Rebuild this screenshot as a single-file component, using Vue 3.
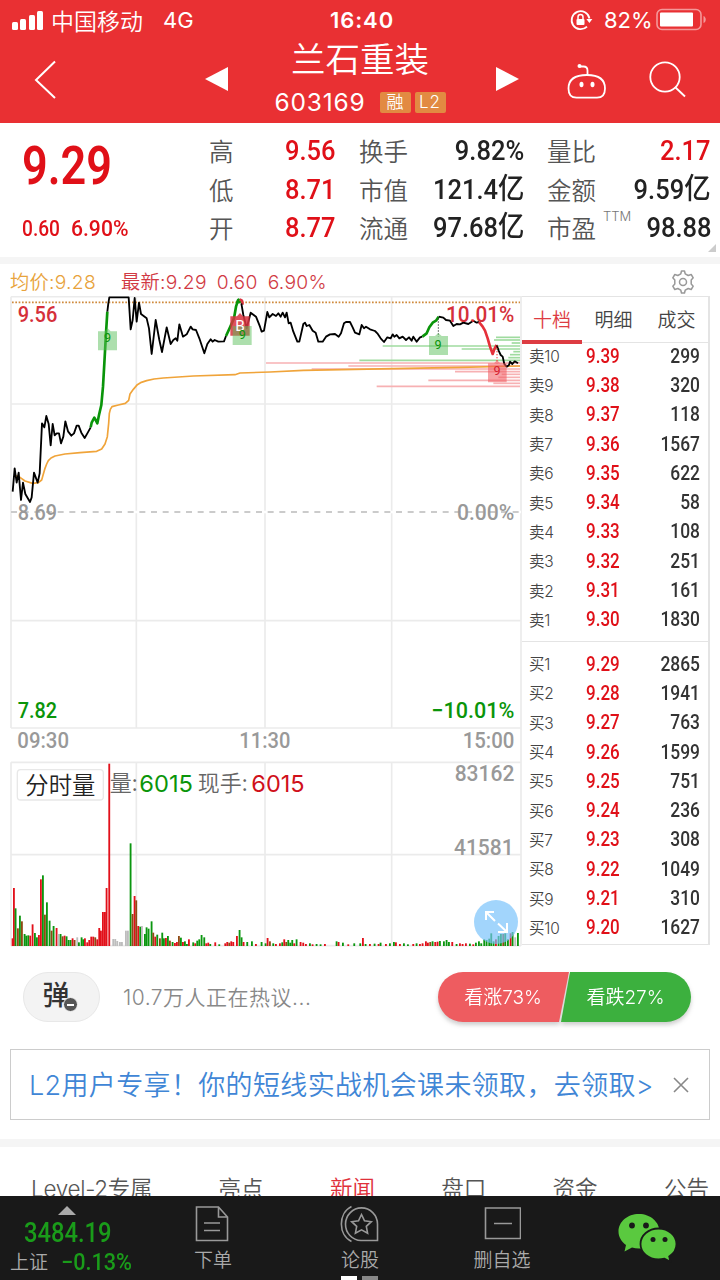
<template>
  <div class="app">
    <header class="header">
      <div class="status">
        <svg class="signal" viewBox="0 0 34 20" width="34" height="20">
          <rect x="1" y="12" width="6" height="8" rx="1.5" />
          <rect x="9" y="9" width="6" height="11" rx="1.5" />
          <rect x="18" y="5" width="6" height="15" rx="1.5" />
          <rect x="26" y="1" width="6" height="19" rx="1.5" />
        </svg>
        <span class="carrier">中国移动</span>
        <span class="network">4G</span>
        <span class="clock">16:40</span>
        <svg class="lock" viewBox="0 0 24 24" width="24" height="24">
          <path d="M20.5 10.5A9 9 0 1 0 18 18.6" fill="none" stroke="#fff" stroke-width="1.8" />
          <path d="M17.4 11h6l-3 4z" />
          <rect x="7.5" y="11" width="8" height="6" rx="1" />
          <path d="M9 11V9a2.5 2.5 0 0 1 5 0v2" fill="none" stroke="#fff" stroke-width="1.5" />
        </svg>
        <span class="percent">82%</span>
        <svg class="battery" viewBox="0 0 52 24" width="52" height="24">
          <rect x="1" y="1.5" width="44" height="20" rx="5" fill="none" stroke="#fff" stroke-opacity=".5" stroke-width="1.6" />
          <rect x="4" y="4.500" width="33" height="14" rx="1" />
          <path d="M47.5 8c3 1 3 6 0 7z" opacity=".5" />
        </svg>
      </div>
      <div class="nav">
        <svg class="back" viewBox="0 0 24 40" width="24" height="40">
          <path d="M21 1.500 2 20l19 18" fill="none" stroke="#fff" stroke-width="2" />
        </svg>
        <svg class="prev" viewBox="0 0 23 24" width="23" height="24"><path d="M0 12 23 0v24z" /></svg>
        <div class="title">
          <h1>兰石重装</h1>
          <div class="code">
            <span>603169</span>
            <i>融</i>
            <i class="l2">L2</i>
          </div>
        </div>
        <svg class="next" viewBox="0 0 23 24" width="23" height="24"><path d="M23 12 0 0v24z" /></svg>
        <svg class="robot" viewBox="0 0 40 36" width="40" height="36" fill="none" stroke="#fff" stroke-width="1.8">
          <path d="M20.500 12V7.500q0-4-4-4H13" />
          <circle cx="12.500" cy="3" r="2" fill="#fff" stroke="none" />
          <path d="M20 12c11 0 18 4 18 13.500 0 7-3 9.200-8 9.200H9.500c-5 0-8-2.200-8-9.200C1.500 16 9 12 20 12z" />
          <ellipse cx="14.500" cy="21.500" rx="2" ry="2.800" fill="#fff" stroke="none" />
          <ellipse cx="25.500" cy="21.500" rx="2" ry="2.800" fill="#fff" stroke="none" />
        </svg>
        <svg class="search" viewBox="0 0 38 38" width="38" height="38" fill="none" stroke="#fff" stroke-width="1.8">
          <circle cx="16" cy="16" r="14.700" />
          <path d="m26 26 10 9.500" />
        </svg>
      </div>
    </header>

    <section class="quote">
      <div class="main-price">
        <div class="price num">9.29</div>
        <div class="change"><span class="num">0.60</span><span class="num">6.90%</span></div>
      </div>
      <dl v-for="(col, i) in stats" :key="i" :class="'col' + i">
        <div v-for="s in col" :key="s.label">
          <dt>{{ s.label }}<sup v-if="s.sup">{{ s.sup }}</sup></dt>
          <dd class="num" :class="{ red: s.red }">{{ s.value }}<b v-if="s.unit">{{ s.unit }}</b></dd>
        </div>
      </dl>
      <span class="corner"></span>
    </section>

    <section class="market">
      <div class="legend">
        <span class="avg">均价:9.28</span>
        <span class="last">最新:9.29</span>
        <span class="last">0.60</span>
        <span class="last">6.90%</span>
        <svg class="gear" viewBox="0 0 24 24" width="24" height="24" fill="none" stroke="#999" stroke-width="1.500" stroke-linejoin="round">
          <path d="M9.800 3.800 10.500 1h3l.7 2.800 3 1.700 3-1 2 3.300-2 2.200v4l2 2.200-2 3.300-3-1-3 1.700-.7 2.800h-3l-.7-2.800-3-1.700-3 1-2-3.300 2-2.200v-4l-2-2.200 2-3.300 3 1z" />
          <circle cx="12" cy="12" r="3.500" />
        </svg>
      </div>

      <div class="panels">
        <div class="chart">
          <svg viewBox="0 18 1566 1962" width="522" height="654">
            <!-- grid -->
            <g fill="none" stroke="#ebebeb" stroke-width="5">
              <path d="M33 20H1566M33 342H1563M33 992H1563M33 1314H1563M33 1417H1563M33 1694H1563M33 1967H1563" />
              <path d="M33 20V1314M409 20V1314M795 20V1314M1175 20V1314M1563 20V1967" />
              <path d="M33 1417V1967M409 1417V1967M795 1417V1967M1175 1417V1967" />
            </g>
            <path d="M33 666H1563" stroke="#fff" stroke-width="7" />
            <path d="M33 666H1563" stroke="#bbb" stroke-width="4" stroke-dasharray="18 17" />
            <path d="M36 37H1560" stroke="#d08a3c" stroke-width="5" stroke-dasharray="5 5" />

            <!-- depth -->
            <path v-for="(d, i) in depth" :key="'d' + i" :d="`M${d[0] + 780} ${d[1]}H1560`" :stroke="d[1] < 215 ? '#9fdb9f' : '#f7b1b3'" stroke-width="5" />

            <g fill="none" stroke-linejoin="round">
              <polyline :points="avgLine" stroke="#f0a43a" stroke-width="5" />
              <polyline v-for="(l, i) in lines" :key="'l' + i" :points="l.points" :stroke="l.color" :stroke-width="l.color === '#000' ? 5.5 : 8" />
            </g>

            <!-- signals -->
            <g class="din mark" font-size="38" text-anchor="middle">
              <path d="M1315 85V140" stroke="#333" stroke-width="3" stroke-dasharray="4 5" />
              <path d="M1491 165V220" stroke="#e33" stroke-width="3" stroke-dasharray="4 5" />
              <path d="M294 124h20l9-9 9 9h19v57h-57z" fill="#5cc05c" opacity=".5" />
              <text x="323" y="156" fill="#0a950a">9</text>
              <path d="M691 79h20l9-10 9 10h20v58h-58z" fill="#d93340" opacity=".85" />
              <path d="M698 108h57v57h-57z" fill="#5cc05c" opacity=".5" />
              <text x="720" y="124" fill="#fff" font-size="46">B</text>
              <text x="727" y="148" fill="#0a950a">9</text>
              <path d="M1287 138h18l10-9 10 9h19v57h-57z" fill="#5cc05c" opacity=".5" />
              <text x="1314" y="177" fill="#0a950a">9</text>
              <path d="M1464 220h18l9-9 10 9h19v57h-56z" fill="#f0585c" opacity=".55" />
              <text x="1491" y="256" fill="#d42030">9</text>
            </g>

            <g class="din" font-size="66">
              <text v-for="t in chartLabels" :key="t.text" :x="t.x" :y="t.y" :fill="t.color" :textLength="t.w" lengthAdjust="spacingAndGlyphs">{{ t.text }}</text>
            </g>

            <!-- volume -->
            <rect x="52" y="1439" width="258" height="91" rx="10" fill="#fff" stroke="#e8e8e8" stroke-width="4" />
            <text class="cjk" x="76" y="1511" font-size="70" fill="#222">分时量</text>
            <g class="cjk" font-size="66">
              <text x="329" y="1503" fill="#666">量:</text>
              <text x="593" y="1503" fill="#666">现手:</text>
            </g>
            <g class="vol" font-size="69">
              <text x="418" y="1505" fill="#0a950a" textLength="161" lengthAdjust="spacingAndGlyphs">6015</text>
              <text x="754" y="1505" fill="#d0101a" textLength="160" lengthAdjust="spacingAndGlyphs">6015</text>
            </g>
            <rect v-for="(b, i) in volume" :key="'v' + i" :x="b[0] - 3" :y="1968 - b[1]" width="5.500" :height="b[1]" :fill="barColors[b[2]]" />
          </svg>
          <button class="expand">
            <svg viewBox="0 0 44 44" width="44" height="44" fill="none" stroke="#fff" stroke-width="2">
              <path d="M12 20V12h8M12 12l9 9" />
              <path d="M33 23v9h-9M33 32l-9-8.500" />
            </svg>
          </button>
        </div>

        <div class="book">
          <div class="book-tabs">
            <span class="active">十档</span>
            <span>明细</span>
            <span>成交</span>
          </div>
          <ul class="sell">
            <li v-for="r in sells" :key="r[0]">
              <span>{{ r[0] }}</span><b class="num">{{ r[1] }}</b><em class="num">{{ r[2] }}</em>
            </li>
          </ul>
          <ul class="buy">
            <li v-for="r in buys" :key="r[0]">
              <span>{{ r[0] }}</span><b class="num">{{ r[1] }}</b><em class="num">{{ r[2] }}</em>
            </li>
          </ul>
        </div>
      </div>
    </section>

    <section class="discuss">
      <div class="danmu">弹<i></i></div>
      <span class="hot">10.7万人正在热议...</span>
      <div class="vote">
        <div class="up"><span>看涨73%</span></div>
        <div class="down"><span>看跌27%</span></div>
      </div>
    </section>

    <section class="banner">
      <span>L2用户专享！你的短线实战机会课未领取，去领取&gt;</span>
      <svg viewBox="0 0 16 16" width="16" height="16"><path d="m1 1 14 14M15 1 1 15" stroke="#888" stroke-width="1.600" /></svg>
    </section>

    <nav class="tabs">
      <span v-for="t in tabs" :key="t" :class="{ active: t === '新闻' }">{{ t }}</span>
    </nav>

    <footer class="toolbar">
      <div class="index">
        <span class="arrow"></span>
        <strong class="num">3484.19</strong>
        <div><span>上证</span><em class="num">−0.13%</em></div>
      </div>
      <div class="tool order">
        <svg viewBox="0 0 36 38" width="36" height="38">
          <path d="M1.500 2h22l9 10v23.500h-31zM23.500 2v10h9M9 18h16M9 25.500h16" />
        </svg>
        <span>下单</span>
      </div>
      <div class="tool talk">
        <svg viewBox="0 0 40 38" width="40" height="38">
          <path d="M11.500 1.500C-2 8-2 30 11.500 36.500M37.500 35.500V19A16 16.300 0 1 0 21 35.500z" />
          <path d="m21.500 9.500 3 6.300 6.800.9-5 4.700 1.300 6.800-6.100-3.300-6.100 3.300 1.300-6.800-5-4.700 6.800-.9z" />
        </svg>
        <span>论股</span>
      </div>
      <div class="tool remove">
        <svg viewBox="0 0 38 36" width="38" height="36">
          <path d="M2.500 3h35v30.500h-35zM11 18.500h18" />
        </svg>
        <span>删自选</span>
      </div>
      <svg class="wechat" viewBox="0 0 60 50" width="60" height="50">
        <path d="M21 1C9.500 1 .5 8.700.5 18.500c0 5.500 3 10.200 7.500 13.500l-1.500 6.500 7.500-4c2.200.7 4.500 1 7 1 11.500 0 20.500-7.700 20.500-17S32.500 1 21 1z" />
        <path d="M40.500 15.500c-10 0-18 6.800-18 15.500s8 15.500 18 15.500c2 0 4-.3 6-.8l6 3-1.300-5.200c4.300-2.800 7.300-7.300 7.300-12.500 0-8.700-8-15.500-18-15.500z" stroke="#191919" stroke-width="1.800" />
        <g fill="#191919">
          <circle cx="14" cy="12.500" r="2.900" /><circle cx="28" cy="12.500" r="2.900" />
          <circle cx="35" cy="26.500" r="2.500" /><circle cx="47" cy="26.500" r="2.500" />
        </g>
      </svg>
      <span class="pages"><i></i><i></i></span>
    </footer>
  </div>
</template>

<script setup>
const stats = [
  [
    { label: '高', value: '9.56', red: true },
    { label: '低', value: '8.71', red: true },
    { label: '开', value: '8.77', red: true }
  ],
  [
    { label: '换手', value: '9.82%' },
    { label: '市值', value: '121.4', unit: '亿' },
    { label: '流通', value: '97.68', unit: '亿' }
  ],
  [
    { label: '量比', value: '2.17', red: true },
    { label: '金额', value: '9.59', unit: '亿' },
    { label: '市盈', value: '98.88', sup: 'TTM' }
  ]
]

const sells = [
  ['卖10', '9.39', 299],
  ['卖9', '9.38', 320],
  ['卖8', '9.37', 118],
  ['卖7', '9.36', 1567],
  ['卖6', '9.35', 622],
  ['卖5', '9.34', 58],
  ['卖4', '9.33', 108],
  ['卖3', '9.32', 251],
  ['卖2', '9.31', 161],
  ['卖1', '9.30', 1830]
]

const buys = [
  ['买1', '9.29', 2865],
  ['买2', '9.28', 1941],
  ['买3', '9.27', 763],
  ['买4', '9.26', 1599],
  ['买5', '9.25', 751],
  ['买6', '9.24', 236],
  ['买7', '9.23', 308],
  ['买8', '9.22', 1049],
  ['买9', '9.21', 310],
  ['买10', '9.20', 1627]
]

const tabs = ['Level-2专属', '亮点', '新闻', '盘口', '资金', '公告']

// chart coordinates are in thirds of a pixel
const chartLabels = [
  { text: '9.56', x: 53, y: 96, w: 119, color: '#d5303a' },
  { text: '10.01%', x: 1338, y: 96, w: 205, color: '#d5303a' },
  { text: '8.69', x: 53, y: 689, w: 118, color: '#999' },
  { text: '0.00%', x: 1371, y: 689, w: 172, color: '#999' },
  { text: '7.82', x: 53, y: 1283, w: 118, color: '#0a950a' },
  { text: '−10.01%', x: 1294, y: 1283, w: 249, color: '#0a950a' },
  { text: '09:30', x: 52, y: 1375, w: 155, color: '#999' },
  { text: '11:30', x: 718, y: 1375, w: 153, color: '#999' },
  { text: '15:00', x: 1388, y: 1375, w: 155, color: '#999' },
  { text: '83162', x: 1364, y: 1473, w: 179, color: '#999' },
  { text: '41581', x: 1362, y: 1694, w: 179, color: '#999' }
]

const avgLine = '44,556 60,562 75,573 98,580 115,578 125,570 135,535 140,522 145,512 153,504 165,498 195,492 240,488 290,484 305,477 315,462 322,440 326,400 328,370 331,358 336,350 355,345 376,340 386,331 390,312 400,298 412,284 424,277 440,272 462,267 490,264 580,258 705,254 720,249 810,246 910,241 1180,236 1380,232 1560,228'

const lines = [
  { color: '#000', points: '38,605 44,535 50,578 56,548 63,630 69,578 76,612 90,636 95,622 102,548 113,578 119,550 126,400 133,412 139,378 146,402 152,466 158,402 164,436 170,430 177,430 183,460 190,440 196,394 204,424 214,437 222,430 230,407 236,407 244,428 254,444 262,430 272,412' },
  { color: '#0a950a', points: '272,412 275,398 283,383 288,392 292,400 297,375 304,345 309,290 313,220 318,130 322,65' },
  { color: '#000', points: '322,65 325,40 328,22 386,22 392,118 398,90 404,24 410,95 417,38 423,72 440,85 447,115 455,192 467,90 478,150 486,186 500,112 512,162 520,150 527,145 532,152 538,103 549,140 560,133 572,110 578,118 588,120 598,145 613,190 622,162 632,148 638,155 644,150 655,155 672,154 678,138' },
  { color: '#0a950a', points: '678,138 690,112 702,85 708,50 715,28' },
  { color: '#0a950a', points: '711,40 716,29 722,38' },
  { color: '#d93340', points: '719,28 726,32 728,44' },
  { color: '#000', points: '724,40 730,75 740,115 752,68 768,80 780,110 785,125 792,122 802,66 808,82 818,72 828,78 835,70 842,80 848,68 855,82 860,68 866,100 872,98 880,125 892,155 898,155 910,102 915,98 920,108 928,105 938,122 947,128 955,155 968,155 978,140 990,133 1005,132 1016,140 1023,130 1032,100 1038,96 1050,96 1058,112 1065,128 1078,133 1085,105 1092,115 1098,110 1110,118 1125,123 1132,130 1142,145 1152,156 1162,142 1172,145 1178,133 1183,140 1190,135 1198,145 1208,140 1218,150 1227,142 1235,152 1240,140 1250,155 1260,142 1267,140' },
  { color: '#0a950a', points: '1267,140 1280,130 1288,112 1298,98 1308,92 1316,80' },
  { color: '#000', points: '1316,80 1330,83 1338,90 1350,92 1360,108 1370,102 1380,103 1390,98 1405,102 1420,92 1430,98 1437,96' },
  { color: '#e5303a', points: '1437,96 1448,110 1455,122 1463,145 1470,170 1478,192 1484,175 1490,165' },
  { color: '#000', points: '1490,165 1496,182 1502,195 1508,200 1513,222 1520,230 1527,225 1530,215 1537,222 1544,214 1554,220' }
]

const depth = [
  [708, 142], [702, 150], [755, 159], [368, 168], [605, 177], [760, 185], [750, 194], [745, 203], [298, 211],
  [18, 219], [265, 228], [155, 237], [585, 245], [725, 253], [715, 262], [505, 271], [700, 280], [350, 289]
]

const barColors = { r: '#e2101a', g: '#0b960f', b: '#8f4a15', n: '#bdbdbd' }

// [x, height, color]
const volume = [
  [38, 23, 'r'], [42, 174, 'r'], [47, 113, 'g'], [54, 53, 'b'], [60, 91, 'g'], [66, 74, 'b'], [74, 36, 'g'], [79, 31, 'g'],
  [85, 32, 'g'], [91, 31, 'r'], [98, 65, 'r'], [105, 39, 'g'], [111, 26, 'g'], [117, 33, 'r'], [123, 200, 'r'], [129, 212, 'g'],
  [135, 94, 'b'], [141, 131, 'g'], [149, 76, 'g'], [155, 46, 'b'], [161, 60, 'g'], [170, 54, 'r'], [176, 36, 'n'], [182, 36, 'g'],
  [188, 29, 'b'], [194, 31, 'r'], [200, 29, 'g'], [206, 18, 'g'], [212, 18, 'g'], [218, 23, 'r'], [224, 18, 'b'], [232, 26, 'n'],
  [237, 11, 'g'], [245, 26, 'g'], [250, 20, 'g'], [255, 23, 'r'], [262, 11, 'r'], [268, 18, 'r'], [274, 28, 'r'], [280, 28, 'r'],
  [286, 26, 'b'], [292, 20, 'r'], [298, 54, 'r'], [303, 46, 'r'], [309, 102, 'r'], [315, 102, 'r'], [320, 174, 'r'], [328, 547, 'r'],
  [340, 21, 'n'], [346, 21, 'n'], [352, 15, 'n'], [360, 12, 'n'], [366, 12, 'n'], [378, 46, 'n'], [384, 46, 'n'],
  [392, 308, 'g'], [398, 96, 'b'], [404, 150, 'r'], [409, 137, 'b'], [415, 60, 'r'], [421, 58, 'g'], [426, 60, 'n'], [435, 36, 'g'],
  [440, 56, 'g'], [446, 52, 'g'], [455, 74, 'g'], [460, 40, 'b'], [466, 28, 'r'], [472, 34, 'g'], [480, 23, 'b'], [487, 40, 'g'],
  [492, 23, 'g'], [498, 24, 'r'], [504, 30, 'g'], [510, 16, 'b'], [518, 12, 'g'], [525, 9, 'r'], [531, 12, 'r'], [537, 30, 'b'],
  [543, 25, 'g'], [549, 12, 'r'], [555, 14, 'g'], [561, 6, 'g'], [567, 20, 'r'], [580, 11, 'g'], [586, 8, 'r'], [592, 16, 'g'],
  [598, 20, 'g'], [605, 33, 'g'], [613, 26, 'g'], [619, 8, 'r'], [625, 10, 'r'], [631, 6, 'g'], [646, 11, 'r'], [658, 5, 'g'],
  [676, 8, 'r'], [682, 12, 'r'], [688, 10, 'b'], [694, 14, 'r'], [700, 12, 'r'], [711, 30, 'r'], [719, 48, 'g'], [725, 26, 'g'],
  [731, 12, 'r'], [742, 12, 'g'], [756, 14, 'g'], [768, 6, 'r'], [785, 12, 'g'], [797, 8, 'g'], [803, 24, 'r'], [810, 14, 'b'],
  [820, 8, 'g'], [828, 6, 'r'], [840, 8, 'r'], [847, 11, 'g'], [853, 20, 'r'], [859, 12, 'b'], [865, 18, 'g'], [871, 10, 'g'],
  [877, 18, 'g'], [883, 8, 'r'], [890, 20, 'g'], [902, 12, 'r'], [910, 10, 'r'], [918, 6, 'r'], [930, 8, 'g'], [938, 5, 'r'],
  [950, 6, 'g'], [962, 5, 'g'], [975, 6, 'r'], [1010, 14, 'g'], [1016, 12, 'r'], [1029, 10, 'g'], [1045, 5, 'r'], [1063, 8, 'g'],
  [1081, 8, 'g'], [1089, 24, 'r'], [1097, 6, 'g'], [1110, 6, 'r'], [1124, 7, 'g'], [1136, 6, 'r'], [1142, 10, 'g'], [1158, 6, 'r'],
  [1170, 8, 'g'], [1182, 12, 'g'], [1188, 11, 'r'], [1200, 6, 'r'], [1212, 8, 'g'], [1224, 5, 'g'], [1240, 6, 'r'], [1250, 8, 'g'],
  [1260, 6, 'r'], [1268, 8, 'r'], [1278, 14, 'r'], [1284, 10, 'r'], [1291, 12, 'b'], [1298, 14, 'g'], [1306, 12, 'r'], [1313, 13, 'r'],
  [1320, 15, 'g'], [1332, 14, 'g'], [1340, 18, 'g'], [1347, 12, 'g'], [1357, 12, 'r'], [1370, 6, 'g'], [1380, 8, 'r'], [1388, 6, 'r'],
  [1398, 8, 'r'], [1410, 7, 'g'], [1420, 5, 'r'], [1428, 10, 'g'], [1437, 14, 'g'], [1444, 8, 'g'], [1453, 20, 'g'], [1460, 18, 'g'],
  [1468, 22, 'g'], [1474, 38, 'g'], [1481, 14, 'g'], [1488, 20, 'r'], [1496, 30, 'g'], [1503, 36, 'g'], [1510, 36, 'b'], [1516, 38, 'g'],
  [1524, 20, 'g'], [1532, 38, 'r'], [1538, 42, 'g'], [1546, 26, 'n'], [1554, 39, 'g']
]
</script>

<style>
body {
  background: #fff;
}
</style>

<style scoped>
* {
  box-sizing: border-box;
  margin: 0;
  padding: 0;
}

.app {
  width: 720px;
  height: 1280px;
  overflow: hidden;
  display: flex;
  flex-direction: column;
  background: #fff;
  font-family: Inter, "Noto Sans CJK SC", sans-serif;
  font-weight: 350;
  color: #333;
  white-space: nowrap;
}

svg {
  display: block;
  flex: none;
}

i, em {
  font-style: normal;
}

ul {
  list-style: none;
}

.num {
  display: inline-block;
  font-family: Roboto, "Noto Sans CJK SC", sans-serif;
  font-weight: 500;
  transform: scaleX(.87);
  transform-origin: left center;
}

.header {
  height: 123px;
  flex: none;
  background: #e93033;
  color: #fff;
}

.header svg {
  fill: #fff;
}

.header .back, .header .robot, .header .search {
  fill: none;
}

.status {
  height: 40px;
  display: flex;
  align-items: center;
  padding-left: 11px;
  font-size: 22px;
}

.carrier {
  margin-left: 6px;
  width: 92px;
  font-size: 23px;
}

.network {
  margin-left: 20px;
  width: 48px;
  font-weight: 400;
}

.clock {
  margin-left: 119px;
  width: 64px;
  font-weight: 600;
  letter-spacing: .9px;
}

.lock {
  margin-left: 175px;
}

.percent {
  margin-left: 11px;
  width: 50px;
  font-weight: 400;
}

.battery {
  margin-left: 2px;
}

.nav {
  height: 83px;
  display: flex;
  align-items: flex-start;
  padding-left: 34px;
}

.back {
  margin-top: 20px;
}

.prev {
  margin: 27px 0 0 147px;
}

.title {
  width: 264px;
  text-align: center;
}

h1 {
  font-size: 34.5px;
  line-height: 40px;
  font-weight: 350;
}

.code {
  display: flex;
  align-items: center;
  justify-content: center;
  height: 30px;
  margin-top: 7px;
  font-size: 24.5px;
}

.code span {
  width: 96px;
  margin-right: 9px;
  font-weight: 400;
  letter-spacing: .8px;
  text-align: left;
}

.code i {
  width: 31px;
  height: 21px;
  margin-right: 4px;
  border-radius: 2px;
  background: #e28a42;
  font-size: 17px;
  line-height: 21px;
}

.code .l2 {
  margin-right: 0;
  letter-spacing: 1px;
}

.next {
  margin: 27px 0 0 4px;
}

.robot {
  margin: 23px 0 0 48px;
}

.search {
  margin: 21px 0 0 42px;
}

.quote {
  position: relative;
  height: 141px;
  flex: none;
  display: flex;
  border-bottom: 7px solid #f5f5f5;
}

.main-price {
  width: 209px;
  padding-left: 22px;
  color: #e01018;
}

.price {
  display: block;
  margin-top: 13px;
  font-size: 53px;
  line-height: 60px;
  font-weight: 600;
  transform: scaleX(.85);
}

.change {
  display: flex;
  margin-top: 20px;
  font-size: 22px;
  line-height: 26px;
}

.change .num + .num {
  margin-left: 5px;
  transform: scaleX(.96);
}

dl {
  padding-top: 9px;
}

dl div {
  height: 38.500px;
  display: flex;
  align-items: center;
  justify-content: space-between;
}

dt {
  position: relative;
  font-size: 24.500px;
  color: #555;
  line-height: 38px;
  padding-top: 2px;
}

sup {
  position: absolute;
  left: 56px;
  top: -1px;
  font-size: 13px;
  line-height: 18px;
  color: #777;
}

dd.num {
  font-size: 28px;
  line-height: 38px;
  color: #222;
  transform: scaleX(.91);
  transform-origin: right center;
}

dd.red {
  color: #e01018;
}

dd b {
  font-weight: 500;
  font-size: 29px;
  line-height: 1;
}

.col0 {
  width: 127px;
}

.col1 {
  width: 165px;
  margin-left: 23px;
}

.col2 {
  width: 164px;
  margin-left: 23px;
}

.corner {
  position: absolute;
  right: 4px;
  bottom: 5px;
  border: 4.500px solid #ccc;
  border-left-color: transparent;
  border-top-color: transparent;
}

.market {
  height: 686px;
  flex: none;
}

.legend {
  height: 32px;
  display: flex;
  align-items: baseline;
  padding: 4px 0 0 10px;
  font-size: 19.300px;
  line-height: 28px;
}

.legend span {
  height: 28px;
  letter-spacing: .25px;
}

.avg {
  width: 111px;
  color: #e8a33c;
}

.last {
  margin-right: 10px;
  color: #d13a44;
}

.gear {
  align-self: center;
  margin-left: auto;
  margin-right: 25px;
}

.panels {
  display: flex;
}

.chart {
  position: relative;
  width: 522px;
  height: 654px;
}

.din {
  font-family: Roboto, sans-serif;
  font-weight: 500;
}

.mark {
  font-weight: 400;
}

.cjk {
  font-family: "Noto Sans CJK SC", sans-serif;
  font-weight: 350;
}

.vol {
  font-family: Inter, sans-serif;
  font-weight: 400;
}

.expand {
  position: absolute;
  left: 474px;
  top: 604px;
  width: 44px;
  height: 44px;
  border: none;
  border-radius: 50%;
  background: rgba(118, 193, 250, .68);
}

.book {
  width: 188px;
  height: 649px;
  border: 1px solid #e4e4e4;
  border-width: 1px 2px 1px 0;
}

.book-tabs {
  display: flex;
  height: 46px;
  border-bottom: 1px solid #e4e4e4;
  font-size: 19px;
  line-height: 48px;
  color: #444;
}

.book-tabs span {
  width: 64px;
  text-align: center;
}

.book-tabs .active {
  height: 47px;
  width: 61px;
  border-bottom: 4px solid #dd3c42;
  color: #dd3c42;
}

.sell {
  height: 299px;
  border-bottom: 1px solid #e4e4e4;
}

.buy {
  padding-top: 9px;
}

/* rows sit slightly above their slot centre */
li {
  display: flex;
  align-items: center;
  height: 29.300px;
  padding: 0 0 4px 7px;
}

li span {
  width: 57px;
  padding-bottom: 1px;
  font-size: 15.500px;
  letter-spacing: -.2px;
  color: #444;
}

li b.num {
  width: 60px;
  font-size: 20px;
  color: #e01018;
  transform: scaleX(.85);
}

li em.num {
  flex: none;
  width: 54px;
  font-size: 20px;
  text-align: right;
  transform-origin: right center;
}

.discuss {
  height: 99px;
  flex: none;
  display: flex;
  align-items: center;
  padding: 0 29px 5px 23px;
}

.danmu {
  position: relative;
  width: 77px;
  height: 50px;
  padding-right: 11px;
  border: 1px solid #e8e8e8;
  border-radius: 25px;
  background: #f3f3f3;
  text-align: center;
  font-size: 27px;
  font-weight: 500;
  line-height: 46px;
}

.danmu i {
  position: absolute;
  left: 39px;
  top: 24px;
  width: 15px;
  height: 15px;
  border: 1px solid #f3f3f3;
  border-radius: 50%;
  background: linear-gradient(#fff, #fff) center / 7px 2px no-repeat #555;
}

.hot {
  margin: 0 0 2px 23px;
  font-size: 21px;
  letter-spacing: .5px;
  color: #888;
}

.vote {
  margin-left: auto;
  display: flex;
  width: 253px;
  height: 50px;
  font-size: 19px;
  line-height: 51px;
  color: #fff;
  filter: drop-shadow(0 3px 2px rgba(60, 60, 60, .25));
}

.vote div {
  width: 131px;
  text-align: center;
}

.vote .up {
  padding-right: 1px;
  border-radius: 25px 0 0 25px;
  background: #ee5c60;
  clip-path: polygon(0 0, 100% 0, 121px 100%, 0 100%);
}

.vote .down {
  margin-left: -9px;
  border-radius: 0 25px 25px 0;
  background: #3cb03e;
  clip-path: polygon(10px 0, 100% 0, 100% 100%, 1px 100%);
}

.banner {
  height: 71px;
  flex: none;
  margin: 0 10px;
  padding: 0 20px 0 18px;
  display: flex;
  align-items: center;
  justify-content: space-between;
  border: 1px solid #ccc;
  font-size: 27px;
  letter-spacing: .35px;
  color: #3f86d6;
}

.banner span {
  padding-bottom: 2px;
}

.tabs {
  height: 57px;
  flex: none;
  display: flex;
  justify-content: space-between;
  margin-top: 19px;
  padding: 25px 11px 0 31px;
  border-top: 8px solid #f5f5f5;
  font-size: 22.500px;
  line-height: 34px;
  color: #555;
  overflow: hidden;
}

.tabs span:first-child {
  letter-spacing: -.3px;
}

.tabs .active {
  color: #e0303a;
}

.toolbar {
  position: relative;
  height: 85px;
  flex: none;
  display: flex;
  background: #191919;
  color: #aaa;
  font-size: 19px;
}

.index {
  width: 192px;
  padding-left: 10px;
}

.arrow {
  display: block;
  width: 0;
  margin: 10px 0 0 48px;
  border: 9px solid transparent;
  border-top: 0;
  border-bottom-color: #aaa;
}

.index strong {
  display: block;
  margin-left: 14px;
  font-size: 27px;
  line-height: 36px;
  color: #1a9c1a;
  transform: scaleX(.88);
}

.index div {
  display: flex;
  align-items: center;
  line-height: 24px;
}

.index em {
  margin-left: 13px;
  font-size: 23px;
  color: #1a9c1a;
  transform: scaleX(.94);
}

.tool {
  display: flex;
  flex-direction: column;
  align-items: center;
  justify-content: space-between;
  height: 79px;
  padding-top: 9px;
}

.tool svg {
  fill: none;
  stroke: #999;
  stroke-width: 1.600;
}

.tool span {
  line-height: 28px;
}

.order {
  width: 42px;
}

.talk {
  width: 42px;
  margin-left: 105px;
}

.remove {
  width: 62px;
  margin-left: 90px;
}

.wechat {
  margin: 17px 0 0 85px;
  fill: #5ac93f;
}

.pages {
  position: absolute;
  left: 341px;
  bottom: 0;
  display: flex;
  gap: 5px;
}

.pages i {
  width: 16px;
  height: 5px;
  background: #fff;
}

.pages i + i {
  background: #888;
}
</style>
